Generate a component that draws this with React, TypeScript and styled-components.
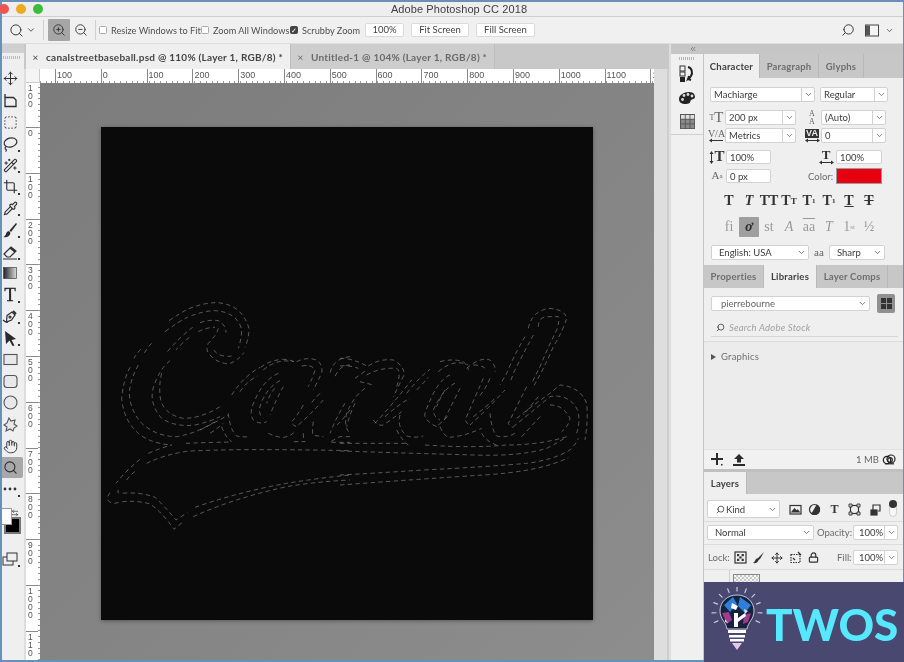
import React from 'react';
import styled, { createGlobalStyle } from 'styled-components';
import { Move, SquareDashed, Search, ZoomIn, ZoomOut, Hand, Crop, Pipette, Wand2, Lock, ChevronDown, ArrowLeftRight, ChevronsLeft } from 'lucide-react';

const Global = createGlobalStyle`
  html, body { margin: 0; padding: 0; width: 904px; height: 662px; overflow: hidden; background: #6b90b8; }
  * { box-sizing: border-box; }
  #root { width: 904px; height: 662px; }
`;

const Frame = styled.div`
  position: relative; width: 904px; height: 662px; padding: 2px 1px 2px 2px;
  display: flex; flex-direction: column; background: #6b90b8; filter: blur(.3px);
  font-family: Lato, "Open Sans", sans-serif; color: #444; overflow: hidden;
`;
const TitleBar = styled.div`
  height: 15px; background: #eeeeee; border-bottom: 1px solid #cfcfcf;
  display: flex; align-items: center; position: relative; flex: none;
`;
const Lights = styled.div`display: flex; gap: 7px; margin-left: -3px;`;
const Light = styled.span<{ $c: string }>`
  width: 10px; height: 10px; border-radius: 50%; background: ${p => p.$c}; display: block;
`;
const Title = styled.div`
  flex: 1; text-align: center; font-size: 11px; color: #3d3d3d; padding-right: 28px;
  letter-spacing: 0.1px; font-family: "Liberation Sans", sans-serif; line-height: 14px;
`;
const Options = styled.div`
  height: 27px; flex: none; background: #f0f0f0; display: flex; align-items: center; color: #505050;
  font-size: 9.2px; border-bottom: 1px solid #dcdcdc;
`;
const OptIcon = styled.span<{ $ml?: number; $w?: number }>`
  display: flex; align-items: center; justify-content: center; margin-left: ${p => p.$ml ?? 0}px;
  width: ${p => p.$w ?? 16}px; color: #3a3a3a; flex: none;
`;
const OptDivider = styled.span<{ $ml: number }>`
  width: 1px; height: 20px; background: #d0d0d0; margin-left: ${p => p.$ml}px; flex: none;
`;
const ActiveOpt = styled.span`
  width: 22px; height: 22px; background: #a6a6a6; margin-left: 4px; border-radius: 1px; flex: none;
  display: flex; align-items: center; justify-content: center; color: #333;
`;
const Check = styled.span<{ $on?: boolean; $ml: number }>`
  width: 8px; height: 8px; flex: none; margin-left: ${p => p.$ml}px; border-radius: 1.5px;
  background: ${p => (p.$on ? '#444' : '#fff')}; border: 1px solid ${p => (p.$on ? '#444' : '#aaa')};
  display: flex; align-items: center; justify-content: center; color: #fff; font-size: 7px; line-height: 1;
`;
const OptLabel = styled.span<{ $w: number; $ml?: number }>`
  width: ${p => p.$w}px; margin-left: ${p => p.$ml ?? 4}px; white-space: nowrap; flex: none;
`;
const OptBtn = styled.span<{ $w: number; $ml: number }>`
  width: ${p => p.$w}px; margin-left: ${p => p.$ml}px; height: 14px; background: #fff; flex: none;
  border: 1px solid #dadada; border-radius: 2px; text-align: center; line-height: 12px; color: #444; font-size: 9.5px;
`;
const OptSpacer = styled.span`flex: 1;`;

const Main = styled.div`flex: 1; display: flex; min-height: 0;`;

const Tools = styled.div`
  width: 22px; flex: none; background: #efefef; display: flex; flex-direction: column; position: relative;
`;
const ToolGrip = styled.div`
  height: 24.2px; flex: none; position: relative;
  background: linear-gradient(#cfcfcf, #cfcfcf) no-repeat 0 0 / 100% 9px;
  &::after {
    content: ''; position: absolute; left: 1px; right: 4px; top: 12px; height: 3px;
    background: repeating-linear-gradient(90deg, #bbb 0 1px, transparent 1px 2px);
  }
`;
const Tool = styled.div<{ $on?: boolean; $corner?: boolean }>`
  height: 21.6px; flex: none; display: flex; align-items: center; justify-content: center;
  position: relative; color: #2e2e2e; padding-right: 5px; margin-right: 1px;
  background: ${p => (p.$on ? '#a8a8a8' : 'transparent')}; border-radius: ${p => (p.$on ? '0 2px 2px 0' : '0')};
  ${p => p.$corner && `&::after { content: ''; position: absolute; right: 3px; bottom: 3px; width: 2px; height: 2px; background: #333; }`}
`;
const ToolSerif = styled.span`
  font-family: "Liberation Serif", serif; font-weight: 400; font-size: 19px; line-height: 1; color: #222;
  -webkit-text-stroke: .3px #222;
`;
const Swatches = styled.div`position: relative; height: 48px; flex: none;`;
const SwapIcon = styled.span`position: absolute; left: 9px; top: 1px; color: #333;`;
const Bg = styled.span`
  position: absolute; left: 2px; top: 17px; width: 17px; height: 17px; background: #000; border: 2px solid #777;
`;
const Fg = styled.span`
  position: absolute; left: 0; top: 8px; width: 10px; height: 17px; background: #fff; border: 1px solid #999; border-left: 0;
`;

const Center = styled.div`width: 647px; flex: none; display: flex; flex-direction: column; background: #dedede;`;
const TabBar = styled.div`height: 25px; flex: none; background: #c8c8c8; display: flex; margin-right: 2px;`;
const Tab = styled.div<{ $on?: boolean; $w: number }>`
  width: ${p => p.$w}px; flex: none; background: ${p => (p.$on ? '#efefef' : '#cdcdcd')};
  border-right: 1px solid #bdbdbd; display: flex; align-items: center; font-size: 10px; letter-spacing: .25px; font-weight: 700;
  color: ${p => (p.$on ? '#444' : '#6a6a6a')}; white-space: nowrap; margin-left: ${p => (p.$on ? 2 : 0)}px;
`;
const TabX = styled.span`width: 20px; text-align: center; font-weight: 400; padding-right: 1px; flex: none; font-size: 10px;`;
const Work = styled.div`flex: 1; display: flex; min-height: 0; padding-left: 2px; padding-right: 2px;`;
const RulerGrid = styled.div`
  width: 628px; flex: none; display: grid; grid-template-columns: 14px 1fr; grid-template-rows: 14px 1fr; min-height: 0;
`;
const Corner = styled.div`
  background: #f4f4f4; border-right: 1px solid #ccc; border-bottom: 1px solid #ccc;
`;
const HRuler = styled.div`
  display: flex; padding-left: 15px; overflow: hidden; background-color: #fff;
  background-image: repeating-linear-gradient(90deg, #999 0 1px, transparent 1px 5.72px);
  background-size: 100% 2px; background-repeat: no-repeat; background-position: 0 100%;
`;
const HMark = styled.div`
  width: 45.8px; flex: none; border-left: 1px solid #8a8a8a; font-size: 9px; color: #555; line-height: 12px;
  padding-left: 1px; height: 14px; font-family: "Liberation Sans", sans-serif;
`;
const VRuler = styled.div`
  display: flex; flex-direction: column; overflow: hidden; background-color: #fff;
  background-image: repeating-linear-gradient(0deg, #999 0 1px, transparent 1px 5.72px);
  background-size: 2px 100%; background-repeat: no-repeat; background-position: 100% 0;
`;
const VMark = styled.div`
  height: 45.8px; flex: none; border-top: 1px solid #8a8a8a; font-size: 8.5px; color: #555; line-height: 8px;
  width: 12px; padding-top: 1px; padding-left: 2px; white-space: pre-wrap; font-family: "Liberation Sans", sans-serif;
  &:first-child { height: 44px; border-top: 0; }
`;
const Canvas = styled.div`
  background: linear-gradient(135deg, #7c7c7c 0%, #858585 55%, #8d8d8d 100%);
  padding: 44px 0 0 61px; min-height: 0; overflow: hidden;
`;
const Doc = styled.div`
  width: 492px; height: 493px; background: #0a0a0a; box-shadow: 0 1px 4px rgba(0,0,0,.35);
`;
const Gutter = styled.div`flex: 1; background: #dedede; border-right: 2px solid #cfcfcf;`;

const Right = styled.div`flex: 1; display: flex; flex-direction: column; min-width: 0;`;
const DockHeader = styled.div`
  height: 10px; flex: none; background: #c6c6c6; display: flex; align-items: center; padding-left: 18px; color: #666;
`;
const RightBody = styled.div`flex: 1; display: flex; min-height: 0;`;
const Dock = styled.div`
  width: 33px; flex: none; background: #f0f0f0; border-right: 1px solid #c4c4c4; display: flex; flex-direction: column;
`;
const DockGroup = styled.div`
  height: 81px; flex: none; border-bottom: 1px solid #cfcfcf; display: flex; flex-direction: column; align-items: center;
  padding-top: 3px; gap: 4.5px;
`;
const Grip = styled.span`
  width: 16px; height: 3px; flex: none; background: repeating-linear-gradient(90deg, #b5b5b5 0 1px, transparent 1px 2px);
`;
const DockIcon = styled.span`height: 19px; display: flex; align-items: center;`;

const Panels = styled.div`flex: 1; display: flex; flex-direction: column; min-width: 0; background: #c4c4c4;`;
const Panel = styled.div<{ $h?: number }>`
  flex: ${p => (p.$h ? 'none' : '1')}; height: ${p => (p.$h ? `${p.$h}px` : 'auto')}; display: flex; flex-direction: column; background: #efefef;
`;
const Tabs = styled.div<{ $h: number }>`
  height: ${p => p.$h}px; flex: none; background: #c7c7c7; display: flex;
`;
const PTab = styled.div<{ $on?: boolean; $w: number }>`
  width: ${p => p.$w}px; flex: none; background: ${p => (p.$on ? '#efefef' : 'transparent')};
  border-right: 1px solid #b9b9b9; display: flex; align-items: center; justify-content: center;
  font-size: 9.5px; font-weight: 700; letter-spacing: .2px; color: ${p => (p.$on ? '#3f3f3f' : '#6e6e6e')}; white-space: nowrap;
`;
const Row = styled.div<{ $mt: number; $h: number }>`
  display: flex; align-items: center; margin-top: ${p => p.$mt}px; height: ${p => p.$h}px; flex: none;
`;
const Field = styled.div<{ $w: number; $ml?: number; $h?: number }>`
  width: ${p => p.$w}px; margin-left: ${p => p.$ml ?? 0}px; height: ${p => p.$h ?? 15}px; flex: none;
  background: #fff; border: 1px solid #d2d2d2; border-radius: 2px; display: flex; align-items: center;
  font-size: 9.5px; color: #3b3b3b; padding-left: 3px; position: relative; overflow: hidden;
`;
const FieldText = styled.span<{ $pl?: number; $c?: string }>`
  flex: 1; white-space: nowrap; overflow: hidden; padding-left: ${p => p.$pl ?? 0}px; color: ${p => p.$c ?? 'inherit'};
`;
const Arrow = styled.span<{ $split?: boolean }>`
  width: 13px; height: 100%; flex: none; display: flex; align-items: center; justify-content: center; color: #555;
  border-left: ${p => (p.$split ? '1px solid #d2d2d2' : '0')};
`;
const Glyph = styled.span<{ $w: number; $ml?: number; $fs?: number; $thin?: boolean }>`
  width: ${p => p.$w}px; margin-left: ${p => p.$ml ?? 0}px; flex: none; text-align: center; color: ${p => (p.$thin ? '#666' : '#333')};
  font-family: "Liberation Serif", serif; font-size: ${p => p.$fs ?? 14}px; font-weight: ${p => (p.$thin ? 400 : 700)}; line-height: 1; white-space: nowrap;
  display: flex; flex-direction: column; align-items: center; justify-content: center;
`;
const GlyphLine = styled.span`display: flex; align-items: center; justify-content: center; line-height: .9;`;
const Small = styled.small<{ $fs: number }>`font-size: ${p => p.$fs}px;`;
const Inverted = styled.span`
  background: #333; color: #eee; font-size: 9px; line-height: 9px; padding: 0 1px; font-family: "Liberation Sans", sans-serif; font-weight: 700;
`;
const Label = styled.span<{ $w: number; $ml?: number; $c?: string }>`
  width: ${p => p.$w}px; margin-left: ${p => p.$ml ?? 0}px; flex: none; font-size: 9.5px; color: ${p => p.$c ?? '#6a6a6a'}; white-space: nowrap;
`;
const Swatch = styled.span`
  width: 46px; height: 16px; flex: none; background: #e60012; border: 1px solid #9a9a9a; margin-left: 4px;
`;
const StyleRow = styled.div<{ $mt: number }>`
  display: flex; margin-top: ${p => p.$mt}px; padding-left: 15px; align-items: center; height: 20px; flex: none;
`;
const StyleCell = styled.span<{ $on?: boolean; $dim?: boolean; $i?: boolean; $deco?: string }>`
  width: 20px; height: 20px; flex: none; display: flex; align-items: center; justify-content: center;
  font-family: "Liberation Serif", serif; font-size: 14px; font-weight: ${p => (p.$dim ? 400 : 700)};
  color: ${p => (p.$on ? '#2d2d2d' : p.$dim ? '#9a9a9a' : '#333')}; font-style: ${p => (p.$i ? 'italic' : 'normal')};
  background: ${p => (p.$on ? '#9f9f9f' : 'transparent')}; border-radius: 1px; white-space: nowrap;
  text-decoration: ${p => p.$deco ?? 'none'};
`;
const Divider = styled.div`height: 1px; background: #d6d6d6; margin: 2px 5px 0 7px; flex: none;`;
const Search2 = styled.div`
  display: flex; align-items: center; gap: 3px; padding: 0 0 0 7px; margin-top: 8px; height: 13px; flex: none;
  font-size: 9.5px; font-style: italic; color: #a0a0a0; letter-spacing: .2px;
`;
const GraphicsArea = styled.div`
  flex: 1; background: #ececec; border-top: 1px solid #dcdcdc; margin-top: 4px; padding: 9px 0 0 7px;
  display: flex; align-self: stretch; gap: 5px; font-size: 9.5px; color: #707070; align-items: flex-start; letter-spacing: .2px;
`;
const Caret = styled.span`
  width: 0; height: 0; border-left: 5px solid #555; border-top: 3px solid transparent; border-bottom: 3px solid transparent; margin-top: 3px;
`;
const LibBtn = styled.span`
  width: 18px; height: 19px; background: #909090; border-radius: 2px; margin-left: 7px; flex: none;
  display: grid; grid-template-columns: 5px 5px; grid-auto-rows: 5px; gap: 1px; align-content: center; justify-content: center;
  & > i { background: #333; display: block; }
`;
const Footer = styled.div`
  height: 20px; flex: none; background: #f1f1f1; display: flex; align-items: center; padding-left: 7px; color: #333;
  font-size: 9.5px; border-top: 1px solid #e2e2e2; gap: 10px;
`;
const FooterSize = styled.span`margin-left: auto; color: #666; margin-right: -7px;`;
const FooterCc = styled.span`margin-right: 6px; display: flex;`;
const LayersGap = styled.div`height: 3px; flex: none; background: #c0c0c0;`;
const RowLine = styled.div<{ $mt: number }>`height: 1px; background: #dcdcdc; flex: none; margin-top: ${p => p.$mt}px;`;
const LayerList = styled.div`
  flex: 1; display: flex; border-top: 1px solid #dcdcdc; background: #efefef; margin-top: 4px; padding-left: 25px;
`;
const Thumb = styled.div`
  width: 27px; height: 20px; border: 1px solid #888; margin: 4px 0 0 3px;
  background: repeating-conic-gradient(#c8c8c8 0 25%, #f4f4f4 0 50%) 0 0 / 4px 4px;
`;
const LayerColumn = styled.div`width: 1px; background: #cfcfcf;`;
const Toggle = styled.span`
  position: relative; width: 8px; height: 16px; border: 1px solid #cfcfcf; border-radius: 4px; margin-left: 7px; flex: none; background: #f7f7f7;
  &::after { content: ''; position: absolute; left: -1px; top: -2px; width: 8px; height: 8px; border-radius: 50%; background: #333; }
`;
const KindIcon = styled.span`display: flex; margin: 0 1px 0 5px; transform: scaleX(-1);`;

const Watermark = styled.div`
  position: absolute; right: 0; bottom: 0; width: 200px; height: 80px; background: #484870;
  display: flex; align-items: center; padding-left: 6px;
`;
const Twos = styled.span`
  font-family: Lato, sans-serif; font-weight: 900; font-size: 44px; line-height: 1; color: #55e8ff; margin-left: 2px; padding-top: 3px;
`;

const C = ({ s = 9 }: { s?: number }) => <ChevronDown size={s} strokeWidth={2} />;

const ArrowLine = ({ both = true }: { both?: boolean }) => (
  <svg width="15" height="5" viewBox="0 0 15 5" fill="#333">
    <rect x="1" y="2" width="13" height="1" />
    <path d="M0 2.5L3 .5v4z" />
    {both && <path d="M15 2.5l-3-2v4z" />}
  </svg>
);
const VArrow = () => (
  <svg width="5" height="13" viewBox="0 0 5 13" fill="#333">
    <rect x="2" y="1" width="1" height="11" /><path d="M2.5 0l2 3h-4zM2.5 13l2-3h-4z" />
  </svg>
);

const LassoIcon = () => (
  <svg width="16" height="16" viewBox="0 0 16 16" fill="none" stroke="currentColor" strokeWidth="1.2">
    <ellipse cx="8.5" cy="6.5" rx="6.5" ry="4.5" transform="rotate(-15 8.5 6.5)" />
    <path d="M4 10.5c-1.5 1-1 2.5 0 3 .6.3.5 1.3-.5 2" />
  </svg>
);
const ArtboardIcon = () => (
  <svg width="15" height="15" viewBox="0 0 15 15" fill="none" stroke="currentColor" strokeWidth="1.3">
    <path d="M2 4.5h8.5L13 7v6.5H2z" /><path d="M2 1v3" />
  </svg>
);
const BrushIcon = () => (
  <svg width="15" height="15" viewBox="0 0 15 15" fill="#2a2a2a">
    <path d="M14 1l-1-1L6.5 7.5 8 9z" /><path d="M6 8C4 8.300 3.500 9.500 3 11c-.3 1-1 2-2.500 3 3 .8 6-.3 7-4z" />
  </svg>
);
const EraserIcon = () => (
  <svg width="16" height="16" viewBox="0 0 16 16">
    <path d="M2 10l7-7 5 4-6 6H5z" fill="none" stroke="#2e2e2e" strokeWidth="1.2" />
    <path d="M7.500 4.500l5 4L14 7 9 3z" fill="#2e2e2e" />
    <path d="M1 15h14" stroke="#2e2e2e" strokeWidth="1" />
  </svg>
);
const GradientIcon = () => (
  <svg width="14" height="12" viewBox="0 0 14 12">
    <defs><linearGradient id="gr"><stop offset="0" stopColor="#222" /><stop offset="1" stopColor="#ddd" /></linearGradient></defs>
    <rect x=".5" y=".5" width="13" height="11" fill="url(#gr)" stroke="#444" strokeWidth=".7" />
  </svg>
);
const PenIcon = () => (
  <svg width="16" height="16" viewBox="0 0 16 16" fill="none" stroke="currentColor" strokeWidth="1.2">
    <path d="M5 6.500L10 3l3 3-3.500 5-5 2 .5-6.500z" /><path d="M1 11c2 2 3 3 5 2" /><circle cx="8" cy="8" r="1" /><path d="M11 2l3 3" strokeWidth="2" />
  </svg>
);
const ArrowIcon = () => (
  <svg width="13" height="15" viewBox="0 0 13 15"><path d="M1 0l11 8-4.500 1 3 5.500-2 .5-3-5.500L2 13z" fill="#2a2a2a" /></svg>
);
const Shape = ({ k }: { k: string }) => (
  <svg width="15" height="15" viewBox="0 0 15 15" fill="#e8e8e8" stroke="#555" strokeWidth="1.1">
    {k === 'rect' && <rect x="1" y="2.500" width="13" height="10" />}
    {k === 'round' && <rect x="1" y="1.500" width="13" height="12" rx="3" />}
    {k === 'ell' && <circle cx="7.500" cy="7.500" r="6.500" />}
    {k === 'star' && <path d="M6 1l2 3 4-1-1 4 3 2-3 2-1 3-3-2-4 2 1-4-3-2 3-2z" />}
  </svg>
);
const ScreenIcon = () => (
  <svg width="16" height="14" viewBox="0 0 16 14" fill="#efefef" stroke="#333" strokeWidth="1">
    <rect x="1" y="5" width="10" height="8" /><rect x="5" y="1" width="10" height="8" />
  </svg>
);
const HistoryIcon = () => (
  <svg width="18" height="18" viewBox="0 0 18 18">
    <rect x="2" y="1" width="5" height="5" fill="none" stroke="#333" /><rect x="2" y="7" width="5" height="4" fill="none" stroke="#333" /><rect x="2" y="12" width="5" height="5" fill="#222" />
    <path d="M10 2c4 1 5 6 3 9-.6 1-1.500 2-3 3l1-3M10 14l3 1" fill="none" stroke="#222" strokeWidth="2" />
  </svg>
);
const PaletteIcon = () => (
  <svg width="18" height="14" viewBox="0 0 18 14">
    <path d="M1 8c0-4 5-7 10-7s6 3 6 5-3 2-4 3 0 4-5 4-7-2-7-5z" fill="#222" />
    <circle cx="6" cy="4.500" r="1.400" fill="#ddd" /><circle cx="10" cy="3.500" r="1.400" fill="#ddd" /><circle cx="14" cy="5" r="1.400" fill="#ddd" /><circle cx="4.500" cy="8.500" r="1.400" fill="#ddd" />
  </svg>
);
const GridIcon = () => (
  <svg width="15" height="15" viewBox="0 0 15 15">
    <rect width="15" height="15" fill="#555" />
    {[0, 1, 2].map(r => [0, 1, 2].map(c => <rect key={`${r}${c}`} x={1 + c * 4.7} y={1 + r * 4.7} width="3.8" height="3.8" fill={r === 0 ? '#ddd' : '#8a8a8a'} />))}
  </svg>
);
const PanelIcon = () => (
  <svg width="14" height="13" viewBox="0 0 14 13"><rect x=".5" y="1" width="13" height="11" fill="#f4f4f4" stroke="#444" /><rect x="1" y="1.500" width="4" height="10" fill="#555" /></svg>
);
const CcIcon = () => (
  <svg width="15" height="11" viewBox="0 0 15 11" fill="none" stroke="#222" strokeWidth="1.2">
    <circle cx="5" cy="6" r="3.700" /><circle cx="9" cy="5" r="4" /><circle cx="8" cy="6" r="2.300" /><path d="M3 9.800h9" />
  </svg>
);
const PlusIcon = () => (
  <svg width="12" height="13" viewBox="0 0 12 13" fill="#2b2b2b"><path d="M5 0h2v5h5v2H7v5H5V7H0V5h5z" /><rect x="10" y="11" width="1.500" height="1.500" /></svg>
);
const PublishIcon = () => (
  <svg width="12" height="12" viewBox="0 0 12 12" fill="#2b2b2b"><path d="M6 0l5 5H8v3.500H4V5H1z" /><rect x="0" y="10" width="12" height="2" /></svg>
);
const Mini = ({ k }: { k: string }) => (
  <svg width="13" height="13" viewBox="0 0 13 13" fill="none" stroke="#333" strokeWidth="1.2">
    {k === 'img' && <><rect x="1" y="2.500" width="11" height="8.500" /><path d="M3 9l2.500-3 2 2 1.200-1 1.500 2z" fill="#333" /></>}
    {k === 'adj' && <><circle cx="6.500" cy="6.500" r="5" /><path d="M6.500 1.500a5 5 0 0 1 0 10z" fill="#333" transform="rotate(30 6.500 6.500)" /></>}
    {k === 'xf' && <><rect x="2.500" y="2.500" width="8" height="8" /><path d="M1 1h3v3H1zM9 1h3v3H9zM1 9h3v3H1zM9 9h3v3H9z" fill="#ccc" strokeWidth=".9" /></>}
    {k === 'smart' && <><path d="M4 7V2h7v6H9" /><rect x="2" y="7" width="6" height="5" fill="#333" /></>}
    {k === 'chk' && <><rect x="1" y="1" width="11" height="11" /><path d="M3 3h2.200v2.200H3zM7.600 3h2.200v2.200H7.600zM5.300 5.400h2.300v2.200H5.300zM3 7.700h2.200v2.200H3zM7.600 7.700h2.200v2.200H7.600z" fill="#333" stroke="none" /></>}
    {k === 'crop' && <><path d="M2 3.500h9v8H2z" strokeDasharray="1.500 1" /><path d="M9 1l3 3M4 7l2 2" /></>}
    {k === 'brush' && <path d="M12 1L6 7l-2 1c-1 1-1 3-3 4 3 .6 5-.5 5.600-3L8 8z" fill="#333" stroke="none" />}
  </svg>
);

const antsA = [
  'M207 92Q240 70 262 58Q310 38 350 38Q425 42 447 115Q447 145 435 172',
  'M195 125Q240 92 262 82Q310 62 345 62Q410 66 425 118Q425 145 415 175',
  'M295 125Q320 112 345 112M300 98Q330 88 355 92Q378 105 378 128',
  'M355 115Q350 135 325 160Q315 180 330 195Q350 218 385 222Q410 215 432 188',
  'M342 180Q350 195 372 198Q385 200 395 198',
  'M278 112Q240 140 198 190M268 142Q245 160 228 180',
  'M155 160Q140 175 130 195M122 178Q110 190 102 205',
  'M115 225Q90 270 88 310Q90 360 125 400Q170 440 230 440Q290 430 345 395',
  'M90 232Q70 270 65 325Q70 390 115 430Q150 460 215 465',
  'M210 212Q175 240 158 300Q150 345 185 385Q225 412 285 405Q330 395 360 380',
  'M185 250Q175 290 182 330Q195 375 250 385Q305 385 360 350',
  'M395 315Q430 260 480 232M420 305Q440 275 472 258',
  'M490 240Q530 205 580 215M482 232Q510 210 550 208Q580 210 590 220',
  'M590 215Q620 200 650 210Q670 225 665 250Q645 290 640 300M605 228Q635 222 645 240Q640 260 625 290',
  'M535 250Q490 270 465 330Q445 370 460 390Q480 405 500 395M540 272Q505 290 485 335Q470 370 490 385',
  'M525 295Q510 310 500 340M550 290Q530 325 510 375',
  'M385 370Q390 420 410 438Q430 442 450 440M365 410Q375 440 395 455',
  'M505 430Q530 442 550 442Q570 440 585 425',
  'M670 330Q635 370 595 405M660 310Q640 330 630 345M610 345Q590 380 575 395Q575 405 590 410',
  'M330 430Q360 410 370 400M300 420Q350 395 385 375',
  'M750 200Q700 205 690 250M750 225Q720 225 705 260',
  'M735 340Q710 380 690 430M750 360Q720 400 705 410',
  'M640 395Q635 430 640 436L670 440M610 430Q610 450 615 455H580',
  'M750 440H720Q700 450 690 457H750',
  'M145 490Q180 475 215 465M258 460Q300 458 395 456',
  'M140 520Q190 495 260 484Q400 475 750 482',
  'M120 508Q80 540 48 580M105 545Q90 555 80 570',
  'M30 608Q20 620 25 632Q35 645 60 636Q110 630 150 642Q185 665 222 718L250 695',
  'M55 600Q48 612 65 610Q120 605 165 622Q195 650 228 690L262 668',
  'M280 680Q400 625 560 590Q650 575 750 570',
  'M285 652Q420 605 560 580Q650 565 750 555',
];
const antsB = [
  'M0 205Q40 205 80 228M0 228Q30 225 55 235',
  'M85 228Q120 205 160 210Q195 230 192 255Q175 290 160 320M80 255Q120 232 170 235Q185 245 170 290',
  'M75 295Q40 320 20 370Q10 410 30 430M45 340Q30 370 20 410',
  'M45 265L80 240M60 275L100 285',
  'M105 400Q160 340 215 270M135 380Q180 340 210 325M100 390Q115 410 130 405Q160 385 185 365',
  'M180 375Q170 410 200 438Q225 445 250 438M170 420Q185 450 205 465',
  'M200 310Q235 265 270 238M230 300Q250 280 265 262',
  'M295 245Q340 205 385 225M300 215Q340 205 370 215Q385 230 385 240',
  'M380 235Q420 200 450 210Q470 230 465 245M400 225Q430 225 440 240',
  'M330 255Q290 270 255 370Q250 390 290 410M345 280Q310 295 280 360Q280 380 300 390',
  'M295 405Q320 385 325 375M315 300Q300 325 290 350M360 295Q340 335 310 395',
  'M300 410Q310 435 325 442Q370 440 425 415',
  'M430 265Q410 310 380 380Q370 395 390 405M450 265Q430 310 415 320',
  'M390 405Q440 360 495 300M400 380Q440 350 470 320',
  'M450 370Q455 420 470 438Q500 445 525 430M425 430Q440 455 470 465',
  'M565 115Q575 65 625 55Q675 58 680 85Q670 120 640 170Q610 240 580 290',
  'M595 110Q595 80 625 80H655Q660 90 650 120Q625 170 600 230L575 280',
  'M555 140Q525 190 500 250L480 285M580 135Q550 190 520 250L510 280',
  'M560 290L530 350L505 400Q510 410 520 412M595 320L550 375',
  'M530 385Q580 345 630 310L660 285Q720 290 740 340Q745 390 735 450',
  'M520 410Q570 370 630 320Q690 310 715 365Q720 400 710 430',
  'M630 345Q670 345 690 385Q685 410 665 425M545 440L605 375',
  'M0 483Q150 488 400 495Q540 500 620 475Q660 455 680 440',
  'M0 460H205M255 465Q400 475 500 465Q600 465 680 440',
  'M0 555Q100 550 250 540Q450 530 560 520Q640 510 690 480Q710 460 715 445',
  'M0 585Q230 568 430 555Q600 545 685 503',
];

const Ants = () => (
  <svg width="492" height="493" viewBox="101 127 492 493" fill="none" stroke="#909090" strokeWidth="1.8" strokeDasharray="13 10">
    <g transform="translate(100 290) scale(.3333)">{antsA.map(d => <path key={d} d={d} />)}</g>
    <g transform="translate(340 290) scale(.3333)">{antsB.map(d => <path key={d} d={d} />)}</g>
  </svg>
);

const rays = [-115, -92, -68, -45, -22, 0, 22, 45, 68, 92, 115];
const Bulb = () => (
  <svg width="54" height="70" viewBox="0 0 54 70">
    <g stroke="#c9c9d6" strokeWidth="1.2" strokeLinecap="round">
      {rays.map(a => {
        const r = (a * Math.PI) / 180;
        return <line key={a} x1={27 + 21 * Math.sin(r)} y1={25 - 21 * Math.cos(r)} x2={27 + 25 * Math.sin(r)} y2={25 - 25 * Math.cos(r)} />;
      })}
    </g>
    <path d="M27 8c10 0 17 7 17 16 0 8-6 11-7 18H17c-1-7-7-10-7-18C10 15 17 8 27 8z" fill="#16233f" stroke="#e8e8f0" strokeWidth=".8" />
    <path d="M14 18l9-8 4 7-7 8zM30 10l11 8-6 8-7-7z" fill="#2f7fd8" />
    <path d="M12 26l7-1 3 8-5 4zM34 28l7-2-3 9-5 2z" fill="#a13a8a" />
    <path d="M22 16l6 3-2 4-5-2zM24 26h4v14h-4zM28 31l7-5 1 3-8 6z" fill="#fff" />
    <path d="M34 22l4 2-3 3zM15 32l3 4-3-1z" fill="#d3e5ff" />
    <path d="M18 43h18v3H18zM19 48h16v2.500H19zM20 52h14v2.500H20z" fill="#fff" />
    <path d="M22 56h10l-5 7z" fill="#e8c8e8" />
  </svg>
);

const hmarks = ['100', '0', '100', '200', '300', '400', '500', '600', '700', '800', '900', '1000', '1100', '1'];
const vmarks = ['1\n0\n0', '0', '1\n0\n0', '2\n0\n0', '3\n0\n0', '4\n0\n0', '5\n0\n0', '6\n0\n0', '7\n0\n0', '8\n0\n0', '9\n0\n0', '1\n0\n0\n0', '1\n1\n0'];

export default function App() {
  return (
    <Frame>
      <Global />
      <TitleBar>
        <Lights>
          <Light $c="#f0544f" /><Light $c="#e9ac1e" /><Light $c="#3ebb3c" />
        </Lights>
        <Title>Adobe Photoshop CC 2018</Title>
      </TitleBar>
      <Options>
        <OptIcon $ml={6}><Search size={15} strokeWidth={1.6} /></OptIcon>
        <OptIcon $ml={1} $w={12}><C s={10} /></OptIcon>
        <OptDivider $ml={6} />
        <ActiveOpt><ZoomIn size={14} strokeWidth={1.6} /></ActiveOpt>
        <OptIcon $ml={3}><ZoomOut size={14} strokeWidth={1.6} /></OptIcon>
        <OptDivider $ml={6} />
        <Check $ml={3} />
        <OptLabel $w={87}>Resize Windows to Fit</OptLabel>
        <Check $ml={3} />
        <OptLabel $w={73}>Zoom All Windows</OptLabel>
        <Check $ml={4} $on>✓</Check>
        <OptLabel $w={58}>Scrubby Zoom</OptLabel>
        <OptBtn $w={39} $ml={5}>100%</OptBtn>
        <OptBtn $w={58} $ml={7}>Fit Screen</OptBtn>
        <OptBtn $w={59} $ml={7}>Fill Screen</OptBtn>
        <OptSpacer />
        <OptIcon $w={14}><Search size={14} strokeWidth={1.7} style={{ transform: 'scaleX(-1)' }} /></OptIcon>
        <OptIcon $ml={10} $w={14}><PanelIcon /></OptIcon>
        <OptIcon $ml={4} $w={12}><C /></OptIcon>
        <OptIcon $w={8} />
      </Options>
      <Main>
        <Tools>
          <ToolGrip />
          <Tool><Move size={15} strokeWidth={1.6} /></Tool>
          <Tool><ArtboardIcon /></Tool>
          <Tool><SquareDashed size={15} strokeWidth={1.5} /></Tool>
          <Tool $corner><LassoIcon /></Tool>
          <Tool $corner><Wand2 size={15} strokeWidth={1.7} /></Tool>
          <Tool $corner><Crop size={15} strokeWidth={1.8} /></Tool>
          <Tool $corner><Pipette size={15} strokeWidth={1.7} /></Tool>
          <Tool $corner><BrushIcon /></Tool>
          <Tool $corner><EraserIcon /></Tool>
          <Tool><GradientIcon /></Tool>
          <Tool $corner><ToolSerif>T</ToolSerif></Tool>
          <Tool $corner><PenIcon /></Tool>
          <Tool $corner><ArrowIcon /></Tool>
          <Tool><Shape k="rect" /></Tool>
          <Tool><Shape k="round" /></Tool>
          <Tool><Shape k="ell" /></Tool>
          <Tool><Shape k="star" /></Tool>
          <Tool><Hand size={15} strokeWidth={1.5} /></Tool>
          <Tool $on><Search size={15} strokeWidth={1.8} /></Tool>
          <Tool $corner>
            <svg width="14" height="4" viewBox="0 0 14 4" fill="#333"><circle cx="2" cy="2" r="1.400" /><circle cx="7" cy="2" r="1.400" /><circle cx="12" cy="2" r="1.400" /></svg>
          </Tool>
          <Swatches>
            <SwapIcon><ArrowLeftRight size={8} strokeWidth={2} /></SwapIcon>
            <Bg /><Fg />
          </Swatches>
          <Tool $corner><ScreenIcon /></Tool>
        </Tools>
        <Center>
          <TabBar>
            <Tab $on $w={265}><TabX>×</TabX>canalstreetbaseball.psd @ 110% (Layer 1, RGB/8) *</Tab>
            <Tab $w={204}><TabX>×</TabX>Untitled-1 @ 104% (Layer 1, RGB/8) *</Tab>
          </TabBar>
          <Work>
            <RulerGrid>
              <Corner />
              <HRuler>{hmarks.map((m, i) => <HMark key={i}>{m}</HMark>)}</HRuler>
              <VRuler>{vmarks.map((m, i) => <VMark key={i}>{m}</VMark>)}</VRuler>
              <Canvas><Doc><Ants /></Doc></Canvas>
            </RulerGrid>
            <Gutter />
          </Work>
        </Center>
        <Right>
          <DockHeader><ChevronsLeft size={8} /></DockHeader>
          <RightBody>
            <Dock>
              <DockGroup>
                <Grip />
                <DockIcon><HistoryIcon /></DockIcon>
                <DockIcon><PaletteIcon /></DockIcon>
                <DockIcon><GridIcon /></DockIcon>
              </DockGroup>
            </Dock>
            <Panels>
              <Panel $h={211}>
                <Tabs $h={24}>
                  <PTab $on $w={56}>Character</PTab>
                  <PTab $w={59}>Paragraph</PTab>
                  <PTab $w={45}>Glyphs</PTab>
                </Tabs>
                <Row $mt={9} $h={15}>
                  <Field $w={105} $ml={6}><FieldText>Machiarge</FieldText><Arrow $split><C /></Arrow></Field>
                  <Field $w={68} $ml={5}><FieldText>Regular</FieldText><Arrow $split><C /></Arrow></Field>
                </Row>
                <Row $mt={8} $h={15}>
                  <Glyph $w={15} $ml={5} $fs={15} $thin><GlyphLine><Small $fs={8}>T</Small>T</GlyphLine></Glyph>
                  <Field $w={71} $ml={1}><FieldText>200 px</FieldText><Arrow $split><C /></Arrow></Field>
                  <Glyph $w={14} $ml={9} $fs={8} $thin><GlyphLine>A</GlyphLine><GlyphLine>A</GlyphLine></Glyph>
                  <Field $w={65} $ml={2}><FieldText>(Auto)</FieldText><Arrow $split><C /></Arrow></Field>
                </Row>
                <Row $mt={3} $h={15}>
                  <Glyph $w={15} $ml={5} $fs={10} $thin><GlyphLine>V/A</GlyphLine><ArrowLine both={false} /></Glyph>
                  <Field $w={71} $ml={1}><FieldText>Metrics</FieldText><Arrow $split><C /></Arrow></Field>
                  <Glyph $w={14} $ml={9}><Inverted>VA</Inverted><ArrowLine /></Glyph>
                  <Field $w={65} $ml={2}><FieldText>0</FieldText><Arrow $split><C /></Arrow></Field>
                </Row>
                <Row $mt={7} $h={14}>
                  <Glyph $w={16} $ml={5} $fs={15}><GlyphLine><VArrow />T</GlyphLine></Glyph>
                  <Field $w={45} $ml={1} $h={14}>100%</Field>
                  <Glyph $w={14} $ml={48} $fs={13}><GlyphLine>T</GlyphLine><ArrowLine /></Glyph>
                  <Field $w={46} $ml={3} $h={14}>100%</Field>
                </Row>
                <Row $mt={5} $h={14}>
                  <Glyph $w={16} $ml={5} $fs={11} $thin><GlyphLine>A<Small $fs={7}>a</Small></GlyphLine></Glyph>
                  <Field $w={45} $ml={1} $h={14}>0 px</Field>
                  <Label $w={24} $ml={37}>Color:</Label>
                  <Swatch />
                </Row>
                <StyleRow $mt={8}>
                  <StyleCell>T</StyleCell>
                  <StyleCell $i>T</StyleCell>
                  <StyleCell>TT</StyleCell>
                  <StyleCell>T<Small $fs={9}>T</Small></StyleCell>
                  <StyleCell>T<sup style={{ fontSize: 7 }}>1</sup></StyleCell>
                  <StyleCell>T<sub style={{ fontSize: 7 }}>1</sub></StyleCell>
                  <StyleCell $deco="underline">T</StyleCell>
                  <StyleCell $deco="line-through">T</StyleCell>
                </StyleRow>
                <StyleRow $mt={6}>
                  <StyleCell $dim>fi</StyleCell>
                  <StyleCell $on $i>ơ</StyleCell>
                  <StyleCell $dim>st</StyleCell>
                  <StyleCell $dim $i>A</StyleCell>
                  <StyleCell $dim $deco="overline">aa</StyleCell>
                  <StyleCell $dim $i>T</StyleCell>
                  <StyleCell $dim>1<sup style={{ fontSize: 7 }}>st</sup></StyleCell>
                  <StyleCell $dim>½</StyleCell>
                </StyleRow>
                <Row $mt={8} $h={15}>
                  <Field $w={98} $ml={7}><FieldText $pl={4}>English: USA</FieldText><Arrow><C /></Arrow></Field>
                  <Glyph $w={14} $ml={3} $fs={11} $thin><GlyphLine>aa</GlyphLine></Glyph>
                  <Field $w={56} $ml={3}><FieldText $pl={4}>Sharp</FieldText><Arrow><C /></Arrow></Field>
                </Row>
              </Panel>
              <Panel $h={184}>
                <Tabs $h={23}>
                  <PTab $w={60}>Properties</PTab>
                  <PTab $on $w={53}>Libraries</PTab>
                  <PTab $w={71}>Layer Comps</PTab>
                </Tabs>
                <Row $mt={6} $h={19}>
                  <Field $w={159} $ml={7} $h={15}><FieldText $pl={6} $c="#666">pierrebourne</FieldText><Arrow><C /></Arrow></Field>
                  <LibBtn><i /><i /><i /><i /></LibBtn>
                </Row>
                <Search2><KindIcon><Search size={9} color="#333" strokeWidth={2} /></KindIcon>Search Adobe Stock</Search2>
                <Divider />
                <GraphicsArea><Caret />Graphics</GraphicsArea>
              </Panel>
              <Footer>
                <PlusIcon />
                <PublishIcon />
                <FooterSize>1 MB</FooterSize>
                <FooterCc><CcIcon /></FooterCc>
              </Footer>
              <LayersGap />
              <Panel>
                <Tabs $h={22}><PTab $on $w={43}>Layers</PTab></Tabs>
                <Row $mt={6} $h={18}>
                  <Field $w={73} $ml={3} $h={18}><KindIcon><Search size={9} color="#333" strokeWidth={2} /></KindIcon><FieldText>Kind</FieldText><Arrow><C /></Arrow></Field>
                  <Glyph $w={13} $ml={9}><Mini k="img" /></Glyph>
                  <Glyph $w={13} $ml={6}><Mini k="adj" /></Glyph>
                  <Glyph $w={13} $ml={7} $fs={12}>T</Glyph>
                  <Glyph $w={13} $ml={7}><Mini k="xf" /></Glyph>
                  <Glyph $w={13} $ml={8}><Mini k="smart" /></Glyph>
                  <Toggle />
                </Row>
                <RowLine $mt={3} />
                <Row $mt={3} $h={15}>
                  <Field $w={107} $ml={3}><FieldText $pl={4}>Normal</FieldText><Arrow><C /></Arrow></Field>
                  <Label $w={33} $ml={3}>Opacity:</Label>
                  <Field $w={45} $ml={3}><FieldText $pl={2}>100%</FieldText><Arrow $split><C /></Arrow></Field>
                </Row>
                <RowLine $mt={4} />
                <Row $mt={5} $h={15}>
                  <Label $w={22} $ml={4}>Lock:</Label>
                  <Glyph $w={13} $ml={4}><Mini k="chk" /></Glyph>
                  <Glyph $w={13} $ml={5}><Mini k="brush" /></Glyph>
                  <Glyph $w={13} $ml={5}><Move size={12} strokeWidth={2} /></Glyph>
                  <Glyph $w={13} $ml={6}><Mini k="crop" /></Glyph>
                  <Glyph $w={13} $ml={5}><Lock size={11} strokeWidth={2.6} /></Glyph>
                  <Label $w={14} $ml={17}>Fill:</Label>
                  <Field $w={45} $ml={2}><FieldText $pl={2}>100%</FieldText><Arrow $split><C /></Arrow></Field>
                </Row>
                <LayerList>
                  <LayerColumn />
                  <Thumb />
                </LayerList>
              </Panel>
            </Panels>
          </RightBody>
        </Right>
      </Main>
      <Watermark>
        <Bulb />
        <Twos>TWOS</Twos>
      </Watermark>
    </Frame>
  );
}
